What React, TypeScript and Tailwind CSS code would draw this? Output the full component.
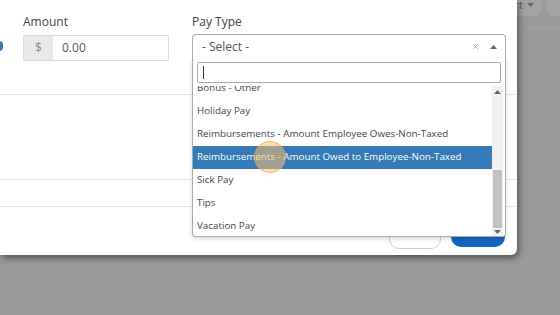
import { X } from 'lucide-react';

const options = [
  'Bonus - Other',
  'Holiday Pay',
  'Reimbursements - Amount Employee Owes-Non-Taxed',
  'Reimbursements - Amount Owed to Employee-Non-Taxed',
  'Sick Pay',
  'Tips',
  'Vacation Pay',
];

const Caret = ({ up = false }: { up?: boolean }) => (
  <svg width="7" height="4" viewBox="0 0 7 4" className={up ? '' : 'rotate-180'}>
    <path d="M0 4 L3.5 0 L7 4 Z" fill="#666" />
  </svg>
);

const App = () => {
  return (
    <div
      className="relative w-[560px] h-[315px] overflow-hidden bg-[#999] text-[11px] text-[#333]"
      style={{ fontFamily: '"Open Sans", "Liberation Sans", sans-serif' }}
    >
      {/* page behind the overlay */}
      <div className="absolute top-0 right-0 flex gap-[4px] -mt-[6px]">
        <div className="h-[22px] px-[8px] rounded-[8px] bg-[#a3a3a3] text-[#5e5e5e] flex items-center gap-1 pl-[20px]">
          ort <Caret />
        </div>
        <div className="h-[22px] w-[14px] rounded-l-[8px] bg-[#a3a3a3]" />
      </div>
      <div className="absolute top-[28px] left-[525px] right-0 h-px bg-[#a3a3a3]" />

      {/* modal */}
      <div className="absolute left-0 top-0 w-[517px] h-[255px] bg-white rounded-br-[6px] shadow-[2px_3px_6px_rgba(0,0,0,0.45)] flex flex-col">
        <div className="flex pt-[14px] h-[94px] relative">
          <div className="absolute -left-[5px] top-[41px] w-[8px] h-[10px] rounded-full bg-[#2f7ab8]" />
          <div className="ml-[23px] w-[146px] flex flex-col">
            <div className="text-[12px] text-[#444] leading-[16px]">Amount</div>
            <div className="mt-[5px] flex h-[26px] border border-[#dcdcdc]">
              <div className="w-[29px] bg-[#e9e9e9] text-[#888] flex items-center justify-center text-[12px]">$</div>
              <div className="flex-1 flex items-center pl-[9px] text-[12px] text-[#555]">0.00</div>
            </div>
          </div>
          <div className="ml-[23px] w-[314px] flex flex-col">
            <div className="text-[12px] text-[#444] leading-[16px]">Pay Type</div>
            <div className="mt-[4px] h-[25px] border border-[#aaa] border-b-[#e5e5e5] rounded-t-[4px] flex items-center pl-[9px] pr-[8px] text-[12px] text-[#555]">
              <span className="flex-1">- Select -</span>
              <X size={9} strokeWidth={2} className="text-[#999] mr-[10px]" />
              <Caret up />
            </div>
          </div>
        </div>
        <div className="h-px bg-[#e5e5e5]" />
        <div className="h-[84px]" />
        <div className="h-px bg-[#e5e5e5]" />
        <div className="h-[26px]" />
        <div className="h-px bg-[#e5e5e5]" />
        <div className="flex justify-end gap-[10px] pr-[12px] pt-[20px]">
          <div className="w-[52px] h-[22px] rounded-[10px] border border-[#ccc] bg-white" />
          <div className="w-[54px] h-[22px] rounded-[10px] bg-[#1565c0] -mt-[2px]" />
        </div>
      </div>

      {/* open select dropdown */}
      <div className="absolute left-[192px] top-[58px] w-[314px] h-[179px] bg-white border border-[#aaa] border-t-0 rounded-b-[4px] shadow-[0_2px_4px_rgba(0,0,0,0.15)] flex flex-col">
        <div className="px-[4px] pt-[4px] pb-[3px]">
          <div className="h-[21px] border border-[#aaa] rounded-[2px] flex items-center pl-[5px]">
            <div className="w-px h-[13px] bg-[#333]" />
          </div>
        </div>
        <div className="flex-1 flex overflow-hidden">
          <div className="flex-1 flex flex-col -mt-[9px] text-[9.8px]">
            {options.map((o, i) => (
              <div
                key={o}
                className={`h-[23px] shrink-0 flex items-center pl-[4px] ${i === 3 ? 'bg-[#337ab7] text-white' : 'text-[#444]'}`}
              >
                {o}
              </div>
            ))}
          </div>
          <div className="w-[11px] mr-[2px] bg-[#f1f1f1] flex flex-col items-center">
            <div className="h-[12px] flex items-center"><Caret up /></div>
            <div className="h-[72px]" />
            <div className="w-[9px] h-[58px] bg-[#c1c1c1]" />
            <div className="flex-1 flex items-center"><Caret /></div>
          </div>
        </div>
      </div>

      {/* click highlight */}
      <div className="absolute left-[254px] top-[141px] w-[32px] h-[32px] rounded-full bg-[rgba(252,190,110,0.55)] border border-[rgba(230,160,70,0.5)]" />
    </div>
  );
};

export default App;
